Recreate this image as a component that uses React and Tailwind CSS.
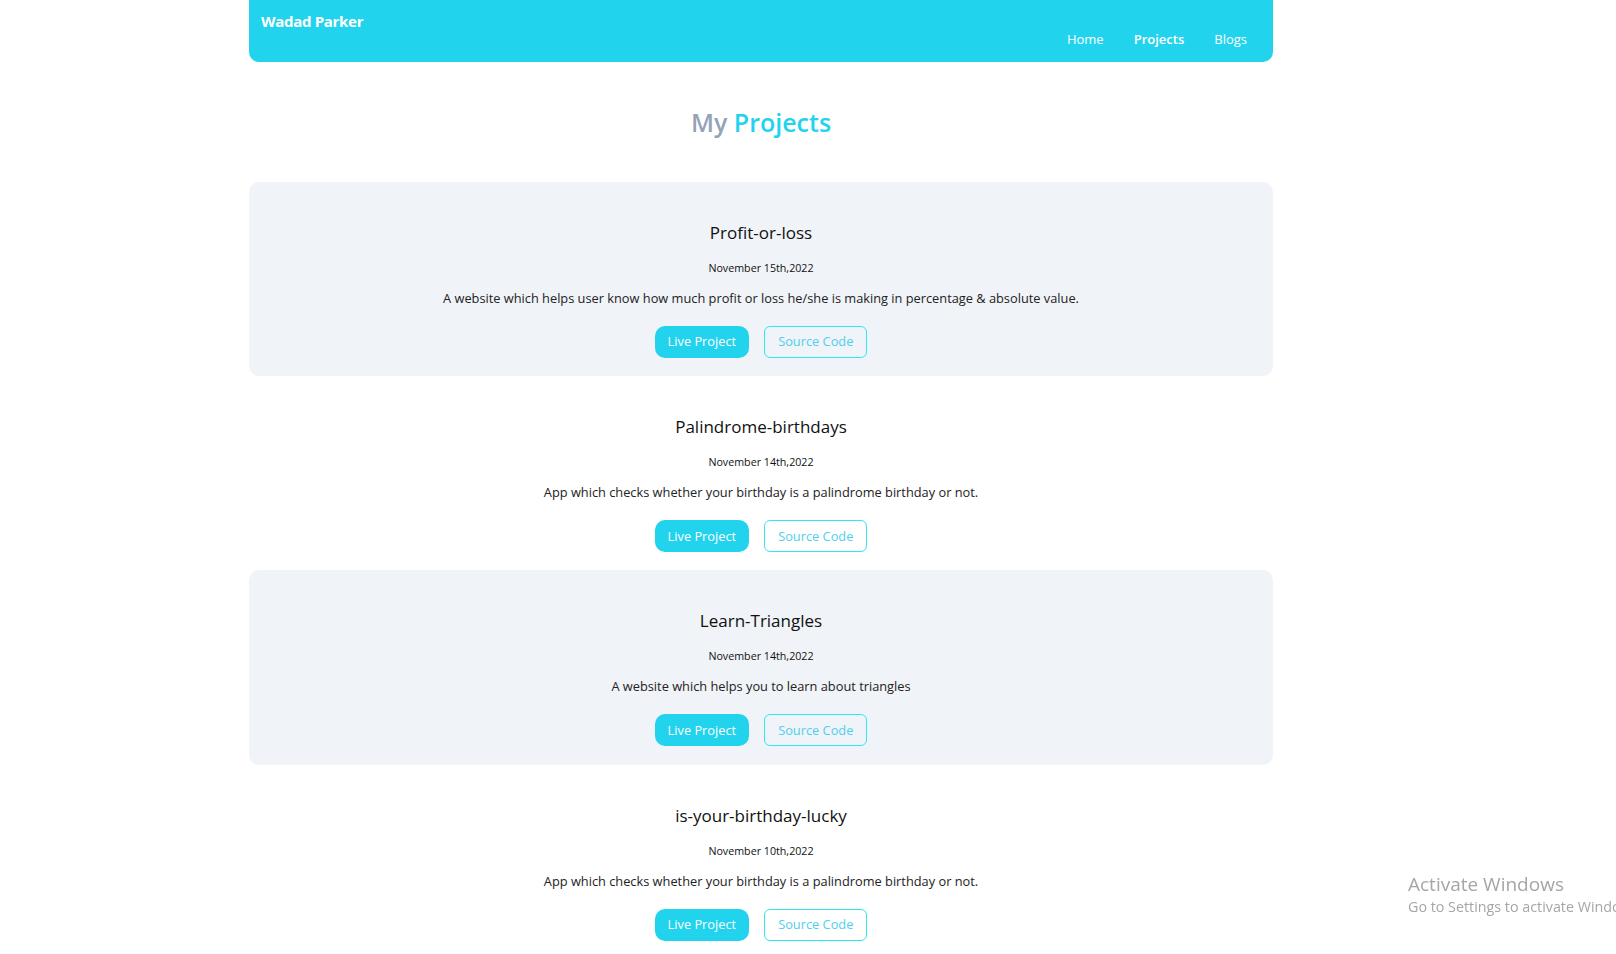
import React from "react";

const projects = [
  {
    title: "Profit-or-loss",
    date: "November 15th,2022",
    desc: "A website which helps user know how much profit or loss he/she is making in percentage & absolute value.",
  },
  {
    title: "Palindrome-birthdays",
    date: "November 14th,2022",
    desc: "App which checks whether your birthday is a palindrome birthday or not.",
  },
  {
    title: "Learn-Triangles",
    date: "November 14th,2022",
    desc: "A website which helps you to learn about triangles",
  },
  {
    title: "is-your-birthday-lucky",
    date: "November 10th,2022",
    desc: "App which checks whether your birthday is a palindrome birthday or not.",
  },
];

function ProjectCard({ project, shaded }) {
  return (
    <div
      className={
        shaded
          ? "h-[194.2px] pt-[39px] rounded-[10px] bg-[#f0f3f8] flex flex-col items-center text-center"
          : "h-[194.2px] pt-[39px] rounded-[10px] bg-white flex flex-col items-center text-center"
      }
    >
      <h2 className="text-[17px] leading-[24px] font-medium text-[#111]">
        {project.title}
      </h2>

      <p className="mt-[15px] text-[10.7px] leading-[16px] text-[#111]">
        {project.date}
      </p>

      <p className="mt-[12px] text-[12.8px] leading-[20px] text-[#222]">
        {project.desc}
      </p>

      <div className="mt-[18px] flex gap-[15px]">
        <a className="h-[32px] px-[13px] flex items-center rounded-[10px] bg-[#22d3ee] text-white text-[12.8px]">
          Live Project
        </a>
        <a className="h-[32px] px-[13px] flex items-center rounded-[6px] border border-[#2ee8f2] text-[#4fd0ec] text-[12.8px]">
          Source Code
        </a>
      </div>
    </div>
  );
}

export default function App() {
  return (
    <div
      className="min-h-screen bg-white"
      style={{ fontFamily: '"Open Sans", "Noto Sans", sans-serif' }}
    >
      <div className="ml-[249px] w-[1024px]">

        {/* Navbar */}
        <header className="h-[62px] bg-[#22d3ee] rounded-b-[10px] flex justify-between pl-3 pr-[26px]">
          <div className="pt-[10px] text-[15px] leading-[22px] font-bold text-white tracking-[-0.3px]">
            Wadad Parker
          </div>
          <nav className="self-end pb-[13px] flex gap-[30px] text-[13px] leading-[20px] text-white">
            <a>Home</a>
            <a className="font-semibold">Projects</a>
            <a>Blogs</a>
          </nav>
        </header>

        {/* Title */}
        <h1 className="mt-[42px] mb-[42px] text-center text-[25px] leading-[36px] font-semibold">
          <span className="text-[#94a3b8]">My </span>
          <span className="text-[#22d3ee]">Projects</span>
        </h1>

        {/* Project list */}
        <div className="flex flex-col">
          {projects.map((p, i) => (
            <ProjectCard key={i} project={p} shaded={i % 2 === 0} />
          ))}
        </div>
      </div>

      {/* Windows watermark */}
      <div className="fixed left-[1408px] top-[871px] text-[#a6a6a6] whitespace-nowrap">
        <p className="text-[19px] leading-[26px]">Activate Windows</p>
        <p className="text-[14.3px] leading-[20px]">Go to Settings to activate Windows.</p>
      </div>
    </div>
  );
}
